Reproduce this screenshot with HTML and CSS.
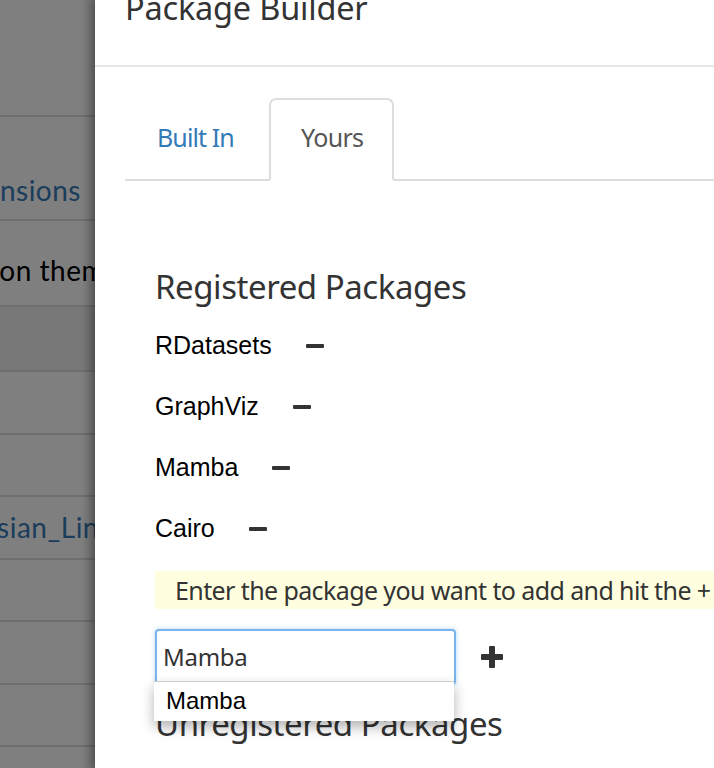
FILE: index.html
```html
<!DOCTYPE html>
<html>
<head>
<meta charset="utf-8">
<link rel="stylesheet" href="styles.css">
</head>
<body>
<div class="page-behind">
  <div class="bg-row r1"></div>
  <div class="bg-row r2"><span class="bg-text link">Extensions</span></div>
  <div class="bg-row r3"><span class="bg-text">Common them</span></div>
  <div class="bg-row r4 dark"></div>
  <div class="bg-row r5"></div>
  <div class="bg-row r5"></div>
  <div class="bg-row r5"><span class="bg-text link">Bayesian_Lin</span></div>
  <div class="bg-row r5"></div>
  <div class="bg-row r5"></div>
  <div class="bg-row r5"></div>
  <div class="bg-row r5"></div>
</div>
<div class="modal">
  <div class="modal-header">
    <h4 class="modal-title">Package Builder</h4>
  </div>
  <div class="modal-body">
    <ul class="nav-tabs">
      <li class="tab"><a class="tab-link">Built In</a></li>
      <li class="tab active"><a class="tab-link">Yours</a></li>
    </ul>
    <div class="tab-content">
      <h3 class="section-title">Registered Packages</h3>
      <ul class="pkg-list">
        <li class="pkg"><span class="pkg-name">RDatasets</span><span class="minus"></span></li>
        <li class="pkg"><span class="pkg-name">GraphViz</span><span class="minus"></span></li>
        <li class="pkg"><span class="pkg-name">Mamba</span><span class="minus"></span></li>
        <li class="pkg"><span class="pkg-name">Cairo</span><span class="minus"></span></li>
      </ul>
      <div class="notice">Enter the package you want to add and hit the +</div>
      <div class="add-row">
        <div class="input-wrap">
          <div class="input">Mamba</div>
          <div class="dropdown"><div class="dropdown-item">Mamba</div></div>
        </div>
        <span class="plus"></span>
      </div>
      <h3 class="section-title second">Unregistered Packages</h3>
      <div class="notice"></div>
    </div>
  </div>
</div>
</body>
</html>
```
FILE: styles.css
```css
html, body {
  margin: 0;
  padding: 0;
}
body {
  display: flex;
  width: 714px;
  height: 768px;
  overflow: hidden;
  background: #fff;
}
.page-behind {
  width: 95px;
  flex-shrink: 0;
  background: #7f7f7f;
  overflow: hidden;
  position: relative;
}
.page-behind::after {
  content: "";
  position: absolute;
  top: 0;
  right: 0;
  width: 14px;
  height: 100%;
  background: linear-gradient(to right, rgba(0,0,0,0), rgba(0,0,0,0.16));
}
.bg-row {
  border-bottom: 2px solid #6e6e6e;
  display: flex;
  justify-content: flex-end;
  align-items: flex-end;
  white-space: nowrap;
  overflow: hidden;
  box-sizing: border-box;
}
.r1 { height: 117px; }
.r2 { height: 104px; }
.r3 { height: 86px; }
.r4 { height: 65px; }
.r5 { height: 62.5px; }
.dark { background: #787878; }
.bg-text {
  font-family: "Lato", "Liberation Sans", sans-serif;
  font-size: 28px;
  color: #000;
  letter-spacing: 0.5px;
}
.r2 .bg-text { margin-right: 14px; margin-bottom: 12px; }
.r3 .bg-text { margin-right: -10px; margin-bottom: 18px; }
.r5 .bg-text { margin-right: -4px; margin-bottom: 14px; }
.bg-text.link { color: #1b3d5c; }

.modal {
  flex: 1;
  background: #fff;
  box-shadow: -3px 0 8px rgba(0,0,0,0.25);
  font-family: "Noto Sans", "Open Sans", sans-serif;
  color: #333;
  position: relative;
  z-index: 1;
}
.modal-header {
  height: 65px;
  border-bottom: 2px solid #e5e5e5;
  padding-left: 30px;
  overflow: hidden;
}
.modal-title {
  margin: -14px 0 0 0;
  font-size: 32.5px;
  font-weight: 400;
  line-height: 44px;
  color: #333;
  letter-spacing: -0.2px;
}
.modal-body {
  padding: 31px 0 0 30px;
}
.nav-tabs {
  list-style: none;
  margin: 0;
  padding: 0;
  display: flex;
  border-bottom: 2px solid #ddd;
}
.tab {
  margin-bottom: -2px;
  border: 2px solid transparent;
  border-radius: 7px 7px 0 0;
  width: 140px;
  height: 73px;
  padding-bottom: 6px;
  box-sizing: content-box;
  display: flex;
  align-items: center;
}
.tab.active {
  width: 121px;
  border-color: #ddd;
  border-bottom-color: #fff;
}
.tab-link {
  font-size: 25px;
  color: #337ab7;
  padding-left: 30px;
  letter-spacing: -0.9px;
}
.tab.active .tab-link {
  color: #555;
  letter-spacing: -0.7px;
}
.tab-content {
  padding-left: 30px;
}
.section-title {
  font-size: 33px;
  font-weight: 400;
  margin: 86px 0 0 0;
  line-height: 40px;
  letter-spacing: -0.45px;
  color: #333;
}
.pkg-list {
  list-style: none;
  margin: 8px 0 0 0;
  padding: 0;
}
.pkg {
  height: 61px;
  display: flex;
  align-items: center;
  font-family: "Liberation Sans", Arial, sans-serif;
  font-size: 25px;
  color: #000;
}
.minus {
  display: inline-block;
  width: 18px;
  height: 4px;
  background: #333;
  border-radius: 1px;
  margin-left: 34px;
}
.notice {
  background: #ffffe0;
  height: 38px;
  margin-top: 12px;
  padding-left: 20px;
  font-size: 25px;
  line-height: 38px;
  color: #333;
  white-space: nowrap;
  letter-spacing: -0.6px;
}
.add-row {
  display: flex;
  align-items: center;
  margin-top: 20px;
}
.input-wrap {
  position: relative;
}
.input {
  width: 291px;
  height: 52px;
  border: 2px solid #7ab3ee;
  border-radius: 4px;
  box-shadow: 0 0 4px rgba(102,175,233,0.5);
  padding-left: 6px;
  font-size: 24px;
  line-height: 52px;
  color: #333;
  letter-spacing: -0.3px;
}
.dropdown {
  position: absolute;
  left: -1px;
  top: 52px;
  width: 300px;
  height: 39px;
  background: #fff;
  border-top: 1px solid #ccc;
  box-shadow: 0 6px 12px rgba(0,0,0,0.3);
  z-index: 5;
}
.dropdown-item {
  padding-left: 12px;
  font-family: "Liberation Sans", Arial, sans-serif;
  font-size: 24px;
  line-height: 38px;
  color: #000;
}
.plus {
  position: relative;
  display: inline-block;
  width: 22px;
  height: 22px;
  margin-left: 25px;
}
.plus::before, .plus::after {
  content: "";
  position: absolute;
  background: #333;
  border-radius: 1px;
}
.plus::before {
  left: 0;
  top: 8px;
  width: 22px;
  height: 6px;
}
.plus::after {
  left: 8px;
  top: 0;
  width: 6px;
  height: 22px;
}
.section-title.second {
  margin-top: 19px;
}
.section-title.second + .notice {
  margin-top: 24px;
}
```
